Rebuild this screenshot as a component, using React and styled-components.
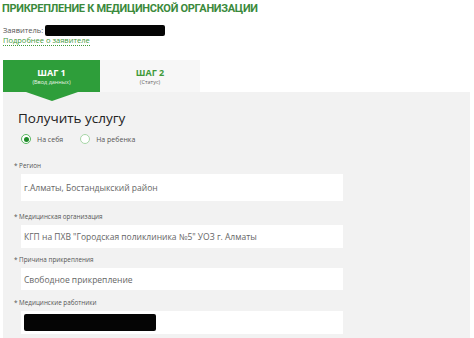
import React from "react";
import styled, { createGlobalStyle } from "styled-components";

const GlobalStyle = createGlobalStyle`
  html, body {
    margin: 0;
    padding: 0;
    background: #fff;
    font-family: "Open Sans", "Noto Sans", sans-serif;
  }
`;

const fields = [
  { label: "Регион", value: "г.Алматы, Бостандыкский район", top: 18, height: 27 },
  {
    label: "Медицинская организация",
    value: 'КГП на ПХВ "Городская поликлиника №5" УОЗ г. Алматы',
    top: 12,
    height: 23,
  },
  { label: "Причина прикрепления", value: "Свободное прикрепление", top: 8, height: 22 },
  { label: "Медицинские работники", value: "", hidden: true, top: 9, height: 23 },
];

function App() {
  return (
    <Page>
      <GlobalStyle />
      <Title>ПРИКРЕПЛЕНИЕ К МЕДИЦИНСКОЙ ОРГАНИЗАЦИИ</Title>
      <Applicant>
        Заявитель: <Redacted $w={120} $h={11} />
      </Applicant>
      <LinkRow>
        <MoreLink>Подробнее о заявителе</MoreLink>
      </LinkRow>

      <Tabs>
        <Tab $active>
          <TabTitle>ШАГ 1</TabTitle>
          <TabSub>(Ввод данных)</TabSub>
        </Tab>
        <Tab>
          <TabTitle>ШАГ 2</TabTitle>
          <TabSub>(Статус)</TabSub>
        </Tab>
      </Tabs>

      <Panel>
        <Heading>Получить услугу</Heading>
        <RadioRow>
          <RadioItem>
            <Radio $checked />
            На себя
          </RadioItem>
          <RadioItem>
            <Radio />
            На ребенка
          </RadioItem>
        </RadioRow>

        {fields.map((f) => (
          <Field key={f.label} $top={f.top}>
            <Label>* {f.label}</Label>
            <Input $h={f.height}>
              {f.hidden ? <Redacted $w={132} $h={17} /> : f.value}
            </Input>
          </Field>
        ))}
      </Panel>
    </Page>
  );
}

const Page = styled.div`
  width: 474px;
  height: 338px;
  overflow: hidden;
  padding: 0 4px 0 3px;
  box-sizing: border-box;
`;

const Title = styled.h1`
  margin: 0 0 0 -1px;
  padding-top: 1px;
  font-family: Roboto, "Open Sans", sans-serif;
  font-size: 11px;
  font-weight: 700;
  color: #3b8a3c;
  letter-spacing: -0.3px;
  line-height: 15px;
  white-space: nowrap;
`;

const Applicant = styled.div`
  margin-top: 8px;
  display: flex;
  align-items: center;
  gap: 2px;
  font-size: 7.5px;
  color: #555;
  height: 12px;
`;

const Redacted = styled.span`
  display: inline-block;
  width: ${(p) => p.$w}px;
  height: ${(p) => p.$h}px;
  background: #050505;
  border-radius: 2px;
`;

const LinkRow = styled.div`
  display: flex;
  height: 10px;
  line-height: 9px;
`;

const MoreLink = styled.a`
  font-size: 7.5px;
  color: #3f9a3a;
  border-bottom: 1px dotted #3f9a3a;
`;

const Tabs = styled.div`
  display: flex;
  margin-top: 14px;
  height: 32px;
`;

const Tab = styled.div`
  position: relative;
  width: ${(p) => (p.$active ? "97px" : "100px")};
  display: flex;
  flex-direction: column;
  align-items: center;
  justify-content: center;
  background: ${(p) => (p.$active ? "#2e9e3a" : "#f7f7f7")};
  color: ${(p) => (p.$active ? "#fff" : "#3f9a3a")};
  ${(p) =>
    p.$active &&
    `
    z-index: 1;
    &::after {
      content: "";
      position: absolute;
      left: 50%;
      bottom: -9px;
      transform: translateX(-50%);
      border-left: 26px solid transparent;
      border-right: 26px solid transparent;
      border-top: 9px solid #2e9e3a;
    }
    span { color: #e6f3e6; }
  `}
`;

const TabTitle = styled.div`
  font-size: 9px;
  font-weight: 700;
  line-height: 11px;
`;

const TabSub = styled.span`
  font-size: 5.5px;
  line-height: 8px;
  color: #666;
`;

const Panel = styled.div`
  background: #f2f2f2;
  padding: 18px 0 0 15px;
  height: 260px;
  box-sizing: border-box;
`;

const Heading = styled.div`
  font-size: 13.5px;
  color: #222;
  line-height: 16px;
`;

const RadioRow = styled.div`
  display: flex;
  gap: 17px;
  margin-top: 8px;
  padding-left: 3px;
`;

const RadioItem = styled.label`
  display: flex;
  align-items: center;
  gap: 6px;
  font-size: 7px;
  color: #555;
`;

const Radio = styled.span`
  width: 8px;
  height: 8px;
  border-radius: 50%;
  border: 1px solid ${(p) => (p.$checked ? "#59b860" : "#a7d6a7")};
  background: #fff;
  display: flex;
  align-items: center;
  justify-content: center;
  &::after {
    content: "";
    width: 5px;
    height: 5px;
    border-radius: 50%;
    background: ${(p) => (p.$checked ? "#1f8a2a" : "transparent")};
  }
`;

const Field = styled.div`
  margin-top: ${(p) => p.$top}px;
  margin-left: -4px;
`;

const Label = styled.div`
  font-size: 6.3px;
  color: #555;
  line-height: 8px;
`;

const Input = styled.div`
  margin-top: 4px;
  margin-left: 7px;
  width: 322px;
  height: ${(p) => p.$h}px;
  background: #fff;
  box-sizing: border-box;
  padding-left: 3px;
  display: flex;
  align-items: center;
  font-size: 8.5px;
  color: #666;
  white-space: nowrap;
`;

export default App;
